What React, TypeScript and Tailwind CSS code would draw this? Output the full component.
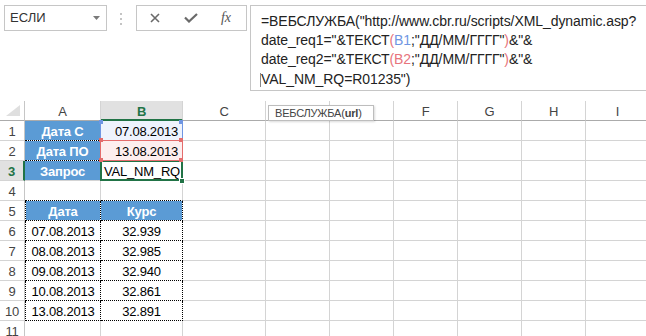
import React from 'react';

const W = [
  'w-[25px]',
  'w-[76px]',
  'w-[82px]',
  'w-[83px]',
  'w-[64px]',
  'w-[64px]',
  'w-[64px]',
  'w-[64px]',
  'w-[64px]',
  'w-[64px]',
];

type Side = 'g' | 'd' | 'f' | 'h' | 'G' | 'H';
const RB: Record<Side, string> = {
  g: 'border-r border-r-[#d4d4d4]',
  d: '[border-right:1px_dotted_#000]',
  f: 'border-r border-r-[#5b9bd5]',
  h: 'border-r border-r-[#c6c6c6]',
  G: 'border-r-2 border-r-[#217346]',
  H: 'border-r border-r-[#d4d4d4]',
};
const BB: Record<Side, string> = {
  g: 'border-b border-b-[#d4d4d4]',
  d: '[border-bottom:1px_dotted_#000]',
  f: 'border-b border-b-[#5b9bd5]',
  h: 'border-b border-b-[#ababab]',
  G: 'border-b-2 border-b-[#217346]',
  H: 'border-b border-b-[#ababab]',
};

type CellDef = { t?: React.ReactNode; r?: Side; b?: Side; l?: boolean; c?: string };

const BLUE = 'bg-[#5b9bd5] text-white font-bold justify-center';
const CENTER = 'justify-center text-black';

function Row({ cells, header }: { cells: CellDef[]; header?: boolean }) {
  return (
    <div className="flex h-[20px] shrink-0">
      {cells.map((cd, i) => (
        <div
          key={i}
          className={[
            W[i],
            'shrink-0 h-[20px] flex items-center overflow-hidden whitespace-nowrap bg-clip-padding pt-[2px] leading-[17px]',
            RB[cd.r ?? (i === 0 ? 'h' : 'g')],
            BB[cd.b ?? (header ? 'h' : 'g')],
            cd.l ? '[border-left:1px_dotted_#000]' : '',
            cd.c ?? '',
          ].join(' ')}
        >
          {cd.t}
        </div>
      ))}
    </div>
  );
}

const rh = (n: string, c = ''): CellDef => ({ t: n, c: 'justify-center text-[#444] ' + c });
const empties = (n: number): CellDef[] => Array.from({ length: n }, () => ({}));

export default function App() {
  const headerRow: CellDef[] = [
    {
      t: (
        <svg width="15" height="12" viewBox="0 0 15 12" className="ml-[6px] mt-[1px]">
          <polygon points="14,0 14,11 0,11" fill="#dfdfdf" />
        </svg>
      ),
      c: 'items-start pt-[3px]',
    },
    { t: 'A', c: 'justify-center text-[#444]' },
    { t: 'B', b: 'G', c: 'justify-center bg-[#e1e1e1] text-[#217346] font-bold' },
    { t: 'C', c: 'justify-center text-[#444]' },
    {},
    {},
    { t: 'F', c: 'justify-center text-[#444]' },
    { t: 'G', c: 'justify-center text-[#444]' },
    { t: 'H', c: 'justify-center text-[#444]' },
    { t: 'I', c: 'justify-center text-[#444]' },
  ];

  const rows: CellDef[][] = [
    [rh('1'), { t: 'Дата С', c: BLUE, r: 'f', b: 'd' }, { t: '07.08.2013', c: 'justify-end pr-[4px] bg-[#eef3fd] text-black' }, ...empties(7)],
    [rh('2'), { t: 'Дата ПО', c: BLUE, r: 'f', b: 'd' }, { t: '13.08.2013', c: 'justify-end pr-[4px] bg-[#fdeeee] text-black' }, ...empties(7)],
    [
      { t: '3', r: 'G', c: 'justify-center bg-[#e1e1e1] text-[#217346] font-bold' },
      { t: 'Запрос', c: BLUE, r: 'f' },
      { t: 'VAL_NM_RQ', c: 'justify-start pl-[3px] text-black' },
      ...empties(7),
    ],
    [rh('4'), { b: 'd' }, { b: 'd' }, ...empties(7)],
    [rh('5'), { t: 'Дата', c: BLUE, l: true, r: 'd', b: 'd' }, { t: 'Курс', c: BLUE, r: 'd', b: 'd' }, ...empties(7)],
    ...[
      ['6', '07.08.2013', '32.939'],
      ['7', '08.08.2013', '32.985'],
      ['8', '09.08.2013', '32.940'],
      ['9', '10.08.2013', '32.861'],
      ['10', '13.08.2013', '32.891'],
    ].map(([n, d, v]) => [
      rh(n),
      { t: d, c: CENTER, l: true, r: 'd' as Side, b: 'd' as Side },
      { t: v, c: CENTER, r: 'd' as Side, b: 'd' as Side },
      ...empties(7),
    ]),
    [rh('11'), ...empties(9)],
  ];

  return (
    <div
      className="relative w-[646px] h-[336px] overflow-hidden bg-white text-[13px] tracking-[-0.2px]"
      style={{ fontFamily: '"Liberation Sans", Arial, sans-serif' }}
    >
      {/* Formula bar area */}
      <div className="flex items-start h-[101px]">
        <div className="ml-[4px] mt-[5px] w-[103px] h-[26px] border border-[#c6c6c6] flex items-center justify-between pl-[5px] pr-[6px] text-[#333] tracking-normal">
          <span>ЕСЛИ</span>
          <svg width="7" height="4" viewBox="0 0 7 4">
            <polygon points="0,0 7,0 3.5,4" fill="#7a7a7a" />
          </svg>
        </div>
        <div className="ml-[13px] mt-[13px] flex flex-col gap-[3px]">
          <div className="w-[2px] h-[2px] bg-[#c4c4c4]" />
          <div className="w-[2px] h-[2px] bg-[#c4c4c4]" />
          <div className="w-[2px] h-[2px] bg-[#c4c4c4]" />
        </div>
        <div className="ml-[14px] mt-[5px] w-[111px] h-[26px] border border-[#c6c6c6] flex items-center pl-[13px]">
          <svg width="10" height="10" viewBox="0 0 10 10">
            <path d="M1 1L9 9M9 1L1 9" stroke="#6a6a6a" strokeWidth="1.6" />
          </svg>
          <svg width="14" height="10" viewBox="0 0 14 10" className="ml-[24px]">
            <path d="M1 4.5L5 8.5L13 1" stroke="#6a6a6a" strokeWidth="2.2" fill="none" />
          </svg>
          <span
            className="ml-[23px] italic text-[14px] text-[#555] leading-none"
            style={{ fontFamily: '"Liberation Serif", "Times New Roman", serif' }}
          >
            fx
          </span>
        </div>
        <div className="ml-[3px] mt-[5px] flex-1 h-[86px] border-l border-t border-b border-[#c6c6c6] pl-[10px] pt-[6px] text-[14px] leading-[19.2px] text-[#222] tracking-[-0.07px] whitespace-nowrap">
          <div>=ВЕБСЛУЖБА("http://www.cbr.ru/scripts/XML_dynamic.asp?</div>
          <div>
            date_req1="&amp;ТЕКСТ<span className="text-[#e8747c]">(</span>
            <span className="text-[#6f96e3]">B1</span>;"ДД/ММ/ГГГГ"<span className="text-[#e8747c]">)</span>&amp;"&amp;
          </div>
          <div>
            date_req2="&amp;ТЕКСТ<span className="text-[#e8747c]">(</span>
            <span className="text-[#e8747c]">B2</span>;"ДД/ММ/ГГГГ"<span className="text-[#e8747c]">)</span>&amp;"&amp;
          </div>
          <div className="relative">
            <span className="absolute left-[-1px] top-[3px] w-px h-[14px] bg-[#888]" />
            VAL_NM_RQ=R01235")
          </div>
        </div>
      </div>

      {/* Grid */}
      <div className="flex flex-col">
        <Row cells={headerRow} header />
        {rows.map((r, i) => (
          <Row key={i} cells={r} />
        ))}
      </div>

      {/* Reference highlights */}
      <div className="absolute left-[100px] top-[121px] w-[83px] h-[20px] border-l border-r border-b border-[#6f96e3]" />
      <div className="absolute left-[99px] top-[120px] w-[4px] h-[4px] bg-[#6f96e3]" />
      <div className="absolute left-[179px] top-[120px] w-[4px] h-[4px] bg-[#6f96e3]" />

      <div className="absolute left-[100px] top-[160px] w-[83px] h-[21px] border-2 border-[#217346]" />
      <div className="absolute left-[179px] top-[178px] w-[6px] h-[6px] bg-[#217346] border border-white" />

      <div className="absolute left-[100px] top-[140px] w-[83px] h-[21px] border border-[#e46c6c]" />
      <div className="absolute left-[99px] top-[138px] w-[4px] h-[4px] bg-[#e46c6c]" />
      <div className="absolute left-[179px] top-[138px] w-[4px] h-[4px] bg-[#e46c6c]" />
      <div className="absolute left-[99px] top-[158px] w-[4px] h-[4px] bg-[#e46c6c]" />
      <div className="absolute left-[179px] top-[158px] w-[4px] h-[4px] bg-[#e46c6c]" />

      {/* Tooltip */}
      <div className="absolute left-[268px] top-[105px] h-[16px] w-[106px] pl-[6px] border border-[#bdbdbd] bg-white text-[11px] text-[#444] tracking-[-0.2px] leading-none flex items-center shadow-[1px_1px_2px_rgba(0,0,0,0.15)] whitespace-nowrap overflow-hidden">
        ВЕБСЛУЖБА(<span className="font-bold">url</span>)
      </div>
    </div>
  );
}
